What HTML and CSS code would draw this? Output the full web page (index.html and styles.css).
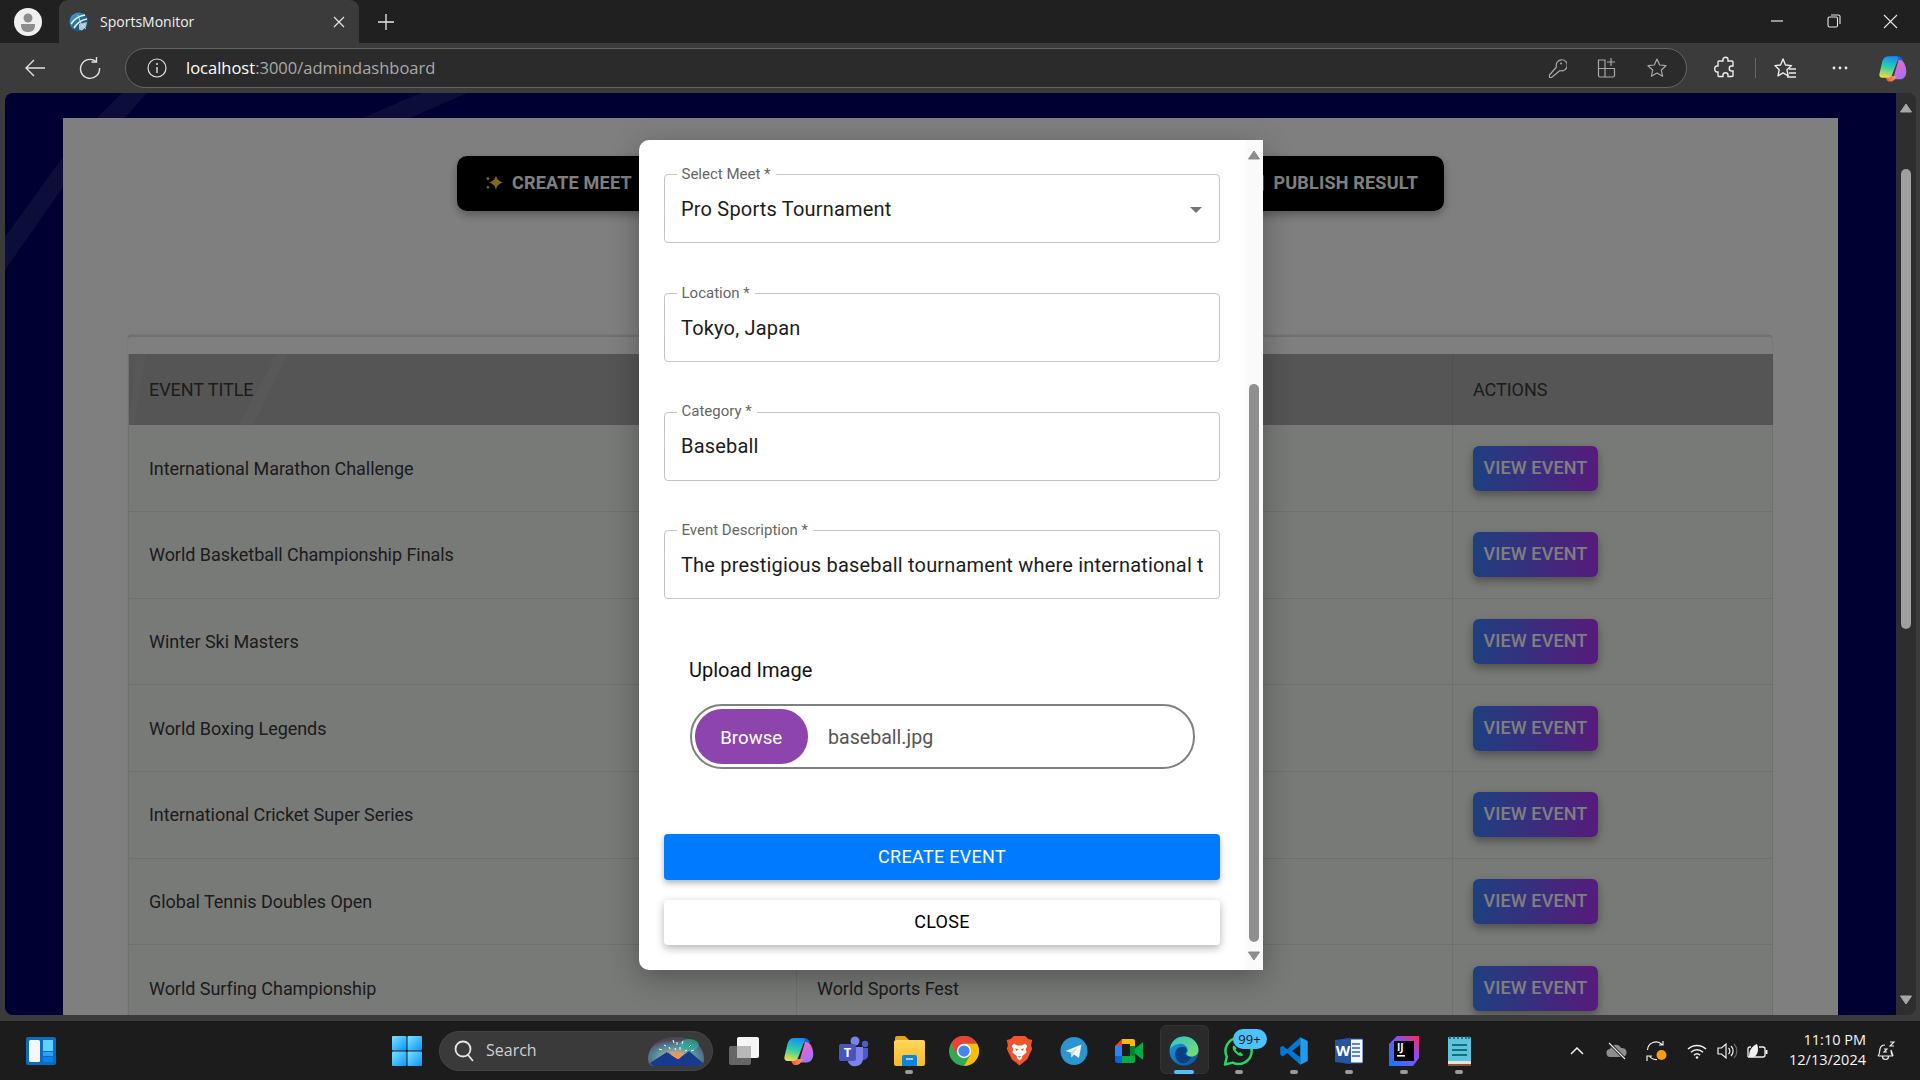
FILE: index.html
```html
<!DOCTYPE html>
<html lang="en">
<head>
<meta charset="utf-8">
<title>SportsMonitor</title>
<link rel="stylesheet" href="styles.css">
</head>
<body>
<svg class="defs" width="0" height="0" aria-hidden="true">
  <defs>
    <linearGradient id="gWin" x1="0" y1="0" x2="1" y2="1"><stop offset="0" stop-color="#7be3ff"/><stop offset="1" stop-color="#0a94fb"/></linearGradient>
    <linearGradient id="gCopA" x1=".5" y1="0" x2=".3" y2="1"><stop offset="0" stop-color="#1590f0"/><stop offset=".5" stop-color="#2fcfa8"/><stop offset="1" stop-color="#f5dc45"/></linearGradient>
    <linearGradient id="gCopB" x1=".2" y1="0" x2=".8" y2="1"><stop offset="0" stop-color="#ef6fb0"/><stop offset=".6" stop-color="#c56ae8"/><stop offset="1" stop-color="#8f7cf5"/></linearGradient>
    <linearGradient id="gCopC" x1="0" y1="0" x2="1" y2="0"><stop offset="0" stop-color="#f0503a"/><stop offset="1" stop-color="#f8a05a"/></linearGradient>
    <linearGradient id="gEdgeA" x1="0" y1="0" x2="1" y2="1"><stop offset="0" stop-color="#1b9de2"/><stop offset="1" stop-color="#0b4f9e"/></linearGradient>
    <linearGradient id="gEdgeB" x1="0" y1="0" x2="1" y2="1"><stop offset="0" stop-color="#2cc3c8"/><stop offset="1" stop-color="#7fe06a"/></linearGradient>
    <linearGradient id="gIj" x1="0" y1="1" x2="1" y2="0"><stop offset="0" stop-color="#087cfa"/><stop offset=".55" stop-color="#7f52ff"/><stop offset="1" stop-color="#fe2857"/></linearGradient>
    <linearGradient id="gFolder" x1="0" y1="0" x2="0" y2="1"><stop offset="0" stop-color="#ffd75e"/><stop offset="1" stop-color="#fbb92a"/></linearGradient>
    <radialGradient id="gSky" cx=".5" cy=".72" r=".62"><stop offset="0" stop-color="#f6cfa0"/><stop offset=".3" stop-color="#b8a888"/><stop offset=".62" stop-color="#4f8f9a"/><stop offset=".88" stop-color="#5a6080"/><stop offset="1" stop-color="#4a4a52"/></radialGradient>
    <linearGradient id="gFav" x1="0" y1="0" x2="1" y2="1"><stop offset="0" stop-color="#45b2e0"/><stop offset=".6" stop-color="#1c5f86"/><stop offset="1" stop-color="#123a55"/></linearGradient>
  </defs>
</svg>

<header class="tabstrip">
  <div class="avatar">
    <svg width="28" height="28" viewBox="0 0 28 28"><ellipse cx="14" cy="14" rx="14" ry="14" fill="#f0f0f0"/><circle cx="14" cy="10" r="4.500" fill="#8d8d8d"/><path d="M7 16h14v2a6 6 0 0 1-6 6h-2a6 6 0 0 1-6-6z" fill="#8d8d8d"/></svg>
  </div>
  <div class="tab">
    <svg width="20" height="20" viewBox="0 0 20 20"><circle cx="10" cy="10" r="9.500" fill="url(#gFav)"/><path d="M2 12C5 7 10 4 16 3M5 16c3-5 7-8 13-9" stroke="#eef5f8" stroke-width="1.600" fill="none"/><path d="M10 12l8-2-1 5-4 3.500-3-1z" fill="#b9c6cd"/><path d="M9 3l3 9 5 5" stroke="#dfe9ee" stroke-width=".8" fill="none"/></svg>
    <span class="tab-title">SportsMonitor</span>
    <svg class="tab-close" width="12" height="12" viewBox="0 0 12 12"><path d="M1 1l10 10M11 1L1 11" stroke="#e6e6e6" stroke-width="1.200"/></svg>
  </div>
  <div class="newtab"><svg width="18" height="18" viewBox="0 0 18 18"><path d="M9 1v16M1 9h16" stroke="#e6e6e6" stroke-width="1.300"/></svg></div>
  <div class="winctl">
    <span class="winbtn"><svg width="14" height="14" viewBox="0 0 14 14"><path d="M1 7h12" stroke="#e6e6e6" stroke-width="1.200"/></svg></span>
    <span class="winbtn"><svg width="14" height="14" viewBox="0 0 14 14"><rect x="1" y="3" width="9.500" height="10" rx="1.500" fill="none" stroke="#e6e6e6" stroke-width="1.100"/><path d="M4 1h7.500A1.500 1.500 0 0 1 13 2.500V10" fill="none" stroke="#e6e6e6" stroke-width="1.100"/></svg></span>
    <span class="winbtn"><svg width="15" height="15" viewBox="0 0 15 15"><path d="M1 1l13 13M14 1L1 14" stroke="#e6e6e6" stroke-width="1.100"/></svg></span>
  </div>
</header>

<nav class="toolbar">
  <span class="navbtn"><svg width="24" height="24" viewBox="0 0 24 24"><path d="M22 12H3M11 4l-8 8 8 8" fill="none" stroke="#e2e2e2" stroke-width="1.400"/></svg></span>
  <span class="navbtn"><svg width="24" height="24" viewBox="0 0 24 24"><path d="M18 5.500A9.500 9.500 0 1 0 21.500 12" fill="none" stroke="#e2e2e2" stroke-width="1.400"/><path d="M18.500 1v5h-5" fill="none" stroke="#e2e2e2" stroke-width="1.400"/></svg></span>
  <div class="address">
    <svg width="20" height="20" viewBox="0 0 20 20"><circle cx="10" cy="10" r="9" fill="none" stroke="#e2e2e2" stroke-width="1.200"/><path d="M10 9v6" stroke="#e2e2e2" stroke-width="1.400"/><circle cx="10" cy="6" r="1" fill="#e2e2e2"/></svg>
    <span class="url"><span class="url-host">localhost</span>:3000/admindashboard</span>
    <div class="addr-icons">
      <span class="addr-icon"><svg width="20" height="22" viewBox="0 0 20 22"><path d="M9.500 10A5.500 5.500 0 1 1 13 13.500L4.500 20.500H2.500V18z" fill="none" stroke="#a8a8a8" stroke-width="1.200" stroke-linejoin="round"/><circle cx="14" cy="6.500" r="1" fill="#a8a8a8"/></svg></span>
      <span class="addr-icon"><svg width="20" height="22" viewBox="0 0 20 22"><path d="M1.500 3h6.500v8.500H1.500zM1.500 11.500H8v8.500H3a1.500 1.500 0 0 1-1.500-1.500zM8 11.500h9.500V18.500a1.500 1.500 0 0 1-1.500 1.500H8zM14 1v8M10 5h8" fill="none" stroke="#a8a8a8" stroke-width="1.200"/></svg></span>
      <span class="addr-icon"><svg width="22" height="22" viewBox="0 0 22 22"><path d="M11 2l2.700 6 6.300.7-4.700 4.300 1.300 6.300L11 16l-5.600 3.300L6.700 13 2 8.700 8.300 8z" fill="none" stroke="#a8a8a8" stroke-width="1.200" stroke-linejoin="round"/></svg></span>
    </div>
  </div>
  <span class="tool tool-puzzle"><svg width="22" height="24" viewBox="0 0 22 24"><path d="M9 3.500c0-3 5-3 5 0V5h4a1 1 0 0 1 1 1v4h-1.500c-3 0-3 5 0 5H19v4.500a1 1 0 0 1-1 1h-4V19c0-3-5-3-5 0v1.500H5a1 1 0 0 1-1-1V16H3c-3 0-3-6 0-6h1V6a1 1 0 0 1 1-1h4z" fill="none" stroke="#ececec" stroke-width="1.400"/></svg></span>
  <span class="tool-sep"></span>
  <span class="tool"><svg width="24" height="24" viewBox="0 0 24 24"><path d="M10 2l2.500 6 6 .6-4.500 4.200 1.200 6-5.200-3-5 3 1.200-6L2 8.600 7.500 8z" transform="translate(0 1)" fill="none" stroke="#ececec" stroke-width="1.400" stroke-linejoin="round"/><path d="M16 13h7M16 17h7M14 21h9" stroke="#ececec" stroke-width="1.300"/></svg></span>
  <span class="tool tool-more"><svg width="18" height="6" viewBox="0 0 18 6"><circle cx="3" cy="3" r="1.400" fill="#ececec"/><circle cx="9" cy="3" r="1.400" fill="#ececec"/><circle cx="15" cy="3" r="1.400" fill="#ececec"/></svg></span>
  <span class="tool tool-copilot"><svg width="28" height="27" viewBox="0 0 30 28"><path d="M16 1h4c3 0 5 2 6 5H15z" fill="#1566d6"/><path d="M21 5c4 0 6 2 7.500 7 1.500 6 .5 9-1 11-1 1.500-3 2.500-5 2.500H15z" fill="url(#gCopB)"/><path d="M7 22h12l-2 3c-1 2-2.500 3-4.500 3H11c-2 0-3.500-2-4-6z" fill="url(#gCopC)"/><path d="M10 1h8c2.500 0 3 1.500 2.500 3L14 21c-1 2-2.500 3-5 3H4c-3 0-4-2-3.500-4.500L3 9c1-5 3-8 7-8z" fill="url(#gCopA)"/></svg></span>
</nav>

<div class="viewport">
  <main class="page">
    <svg class="page-bands" viewBox="0 0 1891 922" preserveAspectRatio="none" aria-hidden="true">
      <polygon points="0,144 58,64 92,25 117,0 142,0 120,25 58,94 0,177"/>
      <polygon points="300,60 357,25 416,0 462,0 405,25 340,60"/>
    </svg>
    <section class="panel">
      <div class="actions">
        <button class="act act-meet">
          <svg width="19" height="19" viewBox="0 0 19 19"><path d="M11 2c.8 4 2.500 6 7 7.500-4.500 1.500-6.200 3.500-7 7.500-.8-4-2.500-6-7-7.500 4.500-1.500 6.200-3.500 7-7.500z" fill="#ffd54a"/><path d="M3 3c.3 1.500 1 2.200 2.200 2.600C4 6 3.300 6.700 3 8.200 2.700 6.700 2 6 .8 5.600 2 5.200 2.700 4.500 3 3zM3 12c.3 1.200.8 1.800 2 2.200-1.200.4-1.700 1-2 2.300-.3-1.300-.8-1.900-2-2.300 1.200-.4 1.700-1 2-2.200z" fill="#ffd54a"/></svg>
          <span>CREATE MEET</span>
        </button>
        <span class="act act-mid"></span>
        <button class="act act-pub">
          <svg width="20" height="20" viewBox="0 0 20 20"><rect x="2" y="2" width="16" height="16" rx="2" fill="#dfe8f5" stroke="#3ea6ff" stroke-width="2"/></svg>
          <span>PUBLISH RESULT</span>
        </button>
      </div>
      <div class="card">
        <table class="events">
          <colgroup><col class="c1"><col class="c2"><col class="c3"></colgroup>
          <thead>
            <tr>
              <th class="th-first">
                <svg class="th-bands" width="300" height="71" viewBox="0 0 300 71" aria-hidden="true"><polygon points="0,71 4,71 17,0 8,0"/><polygon points="110,71 124,71 158,0 148,0"/></svg>
                EVENT TITLE
              </th>
              <th></th>
              <th>ACTIONS</th>
            </tr>
          </thead>
          <tbody>
            <tr><td>International Marathon Challenge</td><td></td><td><button class="view">VIEW EVENT</button></td></tr>
            <tr><td>World Basketball Championship Finals</td><td></td><td><button class="view">VIEW EVENT</button></td></tr>
            <tr><td>Winter Ski Masters</td><td></td><td><button class="view">VIEW EVENT</button></td></tr>
            <tr><td>World Boxing Legends</td><td></td><td><button class="view">VIEW EVENT</button></td></tr>
            <tr><td>International Cricket Super Series</td><td></td><td><button class="view">VIEW EVENT</button></td></tr>
            <tr><td>Global Tennis Doubles Open</td><td></td><td><button class="view">VIEW EVENT</button></td></tr>
            <tr><td>World Surfing Championship</td><td>World Sports Fest</td><td><button class="view">VIEW EVENT</button></td></tr>
          </tbody>
        </table>
      </div>
    </section>
    <div class="overlay"></div>
    <div class="modal">
      <form class="modal-body">
        <div class="field">
          <label class="field-label">Select Meet *</label>
          <div class="field-value">Pro Sports Tournament</div>
          <svg class="caret" width="12" height="6" viewBox="0 0 12 6"><polygon points="0,0 12,0 6,6" fill="#757575"/></svg>
        </div>
        <div class="field">
          <label class="field-label">Location *</label>
          <div class="field-value">Tokyo, Japan</div>
        </div>
        <div class="field field-cat">
          <label class="field-label">Category *</label>
          <div class="field-value">Baseball</div>
        </div>
        <div class="field field-desc">
          <label class="field-label">Event Description *</label>
          <div class="field-value">The prestigious baseball tournament where international t</div>
        </div>
        <div class="upload-label">Upload Image</div>
        <div class="upload">
          <span class="browse">Browse</span>
          <span class="filename">baseball.jpg</span>
        </div>
        <button type="button" class="btn-create">CREATE EVENT</button>
        <button type="button" class="btn-close">CLOSE</button>
      </form>
      <div class="modal-scroll">
        <svg class="arrow-up" width="12" height="10" viewBox="0 0 12 10"><path d="M6 1l5.500 8H.5z" fill="#8c8c8c" stroke="#8c8c8c" stroke-linejoin="round"/></svg>
        <span class="modal-thumb"></span>
        <svg class="arrow-down" width="12" height="10" viewBox="0 0 12 10"><path d="M6 9L.5 1h11z" fill="#8c8c8c" stroke="#8c8c8c" stroke-linejoin="round"/></svg>
      </div>
    </div>
  </main>
  <aside class="page-scroll">
    <svg width="12" height="10" viewBox="0 0 12 10"><path d="M6 1l5.500 8H.5z" fill="#a8a8a8" stroke="#a8a8a8" stroke-linejoin="round"/></svg>
    <span class="page-thumb"></span>
    <svg class="page-arrow-down" width="12" height="10" viewBox="0 0 12 10"><path d="M6 9L.5 1h11z" fill="#a8a8a8" stroke="#a8a8a8" stroke-linejoin="round"/></svg>
  </aside>
</div>

<footer class="taskbar">
  <span class="widgets">
    <svg width="30" height="28" viewBox="0 0 30 28"><rect width="30" height="28" rx="2" fill="#0f6cbd"/><rect x="3" y="3" width="11" height="22" rx="1.500" fill="#f4f6f8"/><rect x="17" y="3" width="10" height="11" fill="#5fd0ff"/><rect x="17" y="15" width="10" height="4" fill="#2aa3f0"/><rect x="17" y="20" width="10" height="5" fill="#0a84e8"/></svg>
  </span>
  <span class="slot slot-start">
    <svg width="30" height="30" viewBox="0 0 30 30"><rect width="14.500" height="14.500" rx="1" fill="url(#gWin)"/><rect x="15.500" width="14.500" height="14.500" rx="1" fill="url(#gWin)"/><rect y="15.500" width="14.500" height="14.500" rx="1" fill="url(#gWin)"/><rect x="15.500" y="15.500" width="14.500" height="14.500" rx="1" fill="url(#gWin)"/></svg>
  </span>
  <div class="search">
    <svg width="22" height="24" viewBox="0 0 22 24"><circle cx="10" cy="10" r="7.500" fill="none" stroke="#e6e6e6" stroke-width="1.800"/><path d="M15 16l5 6" stroke="#e6e6e6" stroke-width="1.800"/></svg>
    <span class="search-text">Search</span>
    <svg class="search-badge" width="58" height="30" viewBox="0 0 58 30"><path d="M1 23C1 9 14 1 29 1s28 8 28 22c0 4-2 7-6 7H7c-4 0-6-3-6-7z" fill="url(#gSky)"/><ellipse cx="42" cy="9" rx="10" ry="6" fill="#28b8a0" opacity=".65"/><path d="M17 9l2 1M26 4l1 3M30 6v3M36 5l-1 3M44 9l-2 2M12 13l3 1M22 11l1 2M33 11v3M28 12l.5 2M40 14l-2 1M47 14l-3 1M20 16l1 1" stroke="#fff" stroke-width="1"/><path d="M3 27L20 16l9 6 2 1 11-8 14 12c-1 2-3 3-5 3H8c-2 0-4-1-5-3z" fill="#183a8c"/><path d="M24 19l5 3 3 1 4-4-6-3z" fill="#ec8f50" opacity=".85"/></svg>
  </div>
  <span class="slot slot-first">
    <svg width="30" height="28" viewBox="0 0 30 28"><rect y="9" width="22" height="19" rx="2" fill="#666"/><rect x="8" width="22" height="21" rx="2" fill="#f5f5f5"/><rect x="8" y="9" width="14" height="12" fill="#b8b8b8"/></svg>
  </span>
  <span class="slot">
    <svg width="30" height="28" viewBox="0 0 30 28"><path d="M16 1h4c3 0 5 2 6 5H15z" fill="#1566d6"/><path d="M21 5c4 0 6 2 7.500 7 1.500 6 .5 9-1 11-1 1.500-3 2.500-5 2.500H15z" fill="url(#gCopB)"/><path d="M7 22h12l-2 3c-1 2-2.500 3-4.500 3H11c-2 0-3.500-2-4-6z" fill="url(#gCopC)"/><path d="M10 1h8c2.500 0 3 1.500 2.500 3L14 21c-1 2-2.500 3-5 3H4c-3 0-4-2-3.500-4.500L3 9c1-5 3-8 7-8z" fill="url(#gCopA)"/></svg>
  </span>
  <span class="slot">
    <svg width="32" height="32" viewBox="0 0 32 32"><circle cx="17" cy="6" r="4.500" fill="#7b83eb"/><circle cx="27" cy="9" r="3.200" fill="#5059c9"/><path d="M22 13h8v8a5 5 0 0 1-8 3z" fill="#5059c9"/><path d="M10 12h15v12a8 8 0 0 1-15 3z" fill="#7b83eb"/><rect x="1" y="9" width="17" height="17" rx="2" fill="#4b53bc"/><text class="svg-t" x="9.500" y="22" text-anchor="middle">T</text></svg>
  </span>
  <span class="slot slot-open">
    <svg width="31" height="30" viewBox="0 0 31 30"><path d="M1 2a2 2 0 0 1 2-2h8l4 4H1z" fill="#e3a21a"/><rect x="0" y="4" width="31" height="26" rx="2" fill="url(#gFolder)"/><path d="M10 19h11a2 2 0 0 1 2 2v9H8v-9a2 2 0 0 1 2-2z" fill="#0c84d8"/><rect x="12" y="22" width="7" height="2" fill="#9bd4f7"/></svg>
  </span>
  <span class="slot">
    <svg width="30" height="30" viewBox="0 0 48 48"><circle cx="24" cy="24" r="24" fill="#34a853"/><path d="M24 12h20.800A24 24 0 0 1 24 48l10.400-18z" fill="#fbbc05"/><path d="M24 12h20.800A24 24 0 0 0 3.200 12L13.600 30z" fill="#ea4335"/><circle cx="24" cy="24" r="11.500" fill="#fff"/><circle cx="24" cy="24" r="9" fill="#4285f4"/></svg>
  </span>
  <span class="slot">
    <svg width="27" height="31" viewBox="0 0 24 28"><path d="M7 1h10l3 2.500 3.500 1-1 5 1 3L19 22l-7 5.500L5 22 .5 12.500l1-3-1-5L4 3.500z" fill="#f1562b"/><path d="M7 8l3 1.500h4L17 8l2 2-1.500 3 1 2.500-4 3.500-.5 2.500-2 1.500-2-1.500-.5-2.500-4-3.500 1-2.500L5 10z" fill="#fff"/><path d="M8 12l3 1-2 1.500zM16 12l-3 1 2 1.500zM10.500 19h3L12 20.500z" fill="#f1562b"/></svg>
  </span>
  <span class="slot">
    <svg width="28" height="28" viewBox="0 0 28 28"><ellipse cx="14" cy="14" rx="13.500" ry="14" fill="#2a95d0"/><path d="M5.500 14L21.500 7.500 19 21l-5-3.500-2.500 3-.8-5z" fill="#f2f7fa"/><path d="M10.700 15.500l7-5-5 6.500-1.500 3.500z" fill="#bcd6e6"/></svg>
  </span>
  <span class="slot">
    <svg width="28" height="28" viewBox="0 0 28 28"><path d="M0 9L7 2v7z" fill="#ea4335"/><path d="M0 9h7v10H0z" fill="#2684fc"/><path d="M0 19h7v7H2a2 2 0 0 1-2-2z" fill="#0066da"/><path d="M7 2h11a2 2 0 0 1 2 2v5h-5V7H7z" fill="#ffba00"/><path d="M7 19h13v5a2 2 0 0 1-2 2H7z" fill="#00ac47"/><rect x="7" y="7" width="8" height="12" fill="#1c1c1c"/><path d="M15 9h5v10h-5z" fill="#00832d"/><path d="M20 11.500L28 5v18l-8-6.500z" fill="#00ac47"/></svg>
  </span>
  <span class="slot slot-active">
    <svg width="30" height="30" viewBox="0 0 30 30"><circle cx="15" cy="15" r="14.500" fill="url(#gEdgeA)"/><path d="M1 13C2 5 8 .5 15 .5c8 0 14.500 6 14.500 13.500 0 4-3 6.500-7 6.500-3 0-5.500-1.500-5-3.500 1-1 1.500-2 1-4C17.500 9 13 7 9 8c-4 1-7 3-8 5z" fill="url(#gEdgeB)"/><path d="M10 26c-4-3-5-9-2-13 3-3 8-3 9.500 0 .5 2 0 3-1 4-.5 2 2 4 6 4-3 6-9 8-12.500 5z" fill="#0a3f86"/></svg>
  </span>
  <span class="slot slot-open">
    <svg class="wa" width="31" height="32" viewBox="0 0 32 32"><path d="M2 30l2-8A13.500 13.500 0 1 1 10 28z" fill="none" stroke="#25d366" stroke-width="2.600" stroke-linejoin="round"/><path d="M11 10c-2 2-1 5 2 8s6 4 8 2l-3-3-2 1-3-3 1-2z" fill="#25d366"/></svg>
    <span class="badge">99+</span>
  </span>
  <span class="slot slot-open">
    <svg width="30" height="30" viewBox="0 0 24 24"><path d="M17 1L6.500 10.500 3 7.700 1 9v6l2 1.300 3.500-2.800L17 23v-6l-6.500-5L17 7z" fill="#0078d4"/><path d="M17 1l6 3v16l-6 3z" fill="#1f9cf0"/></svg>
  </span>
  <span class="slot slot-open">
    <svg width="28" height="30" viewBox="0 0 28 30"><rect x="9" y="3" width="19" height="24" rx="1" fill="#f4f6f8" stroke="#1e4e9c"/><path d="M17 8h8M17 12h8M17 16h8M17 20h8" stroke="#2b66b8" stroke-width="1.600"/><path d="M0 4l16-2v26l-16-2z" fill="#27549f"/><text class="svg-w" x="8" y="20" text-anchor="middle">W</text></svg>
  </span>
  <span class="slot slot-open">
    <svg width="30" height="30" viewBox="0 0 30 30"><path d="M8 0h22v22l-6 8H0V8z" fill="url(#gIj)"/><rect x="5" y="5" width="20" height="20" fill="#000"/><text class="svg-ij" x="8" y="15">IJ</text><rect x="8" y="19" width="8" height="1.600" fill="#fff"/></svg>
  </span>
  <span class="slot slot-open">
    <svg width="23" height="30" viewBox="0 0 23 30"><rect y="1" width="23" height="25" rx="1" fill="#5ec3dc"/><path d="M2 0v3M6 0v3M10 0v3M14 0v3M18 0v3M21 0v3" stroke="#11565f" stroke-width="1.400"/><path d="M4 9h15M4 14h15M4 19h15" stroke="#12707f" stroke-width="1.800"/><rect y="25" width="23" height="3" fill="#e7e2d9"/><rect y="28" width="23" height="2" fill="#8a5232"/></svg>
  </span>
  <div class="tray">
    <span class="tray-slot"><svg width="14" height="8" viewBox="0 0 14 8"><path d="M1 7l6-6 6 6" fill="none" stroke="#f0f0f0" stroke-width="1.500"/></svg></span>
    <span class="tray-slot"><svg width="22" height="18" viewBox="0 0 22 18"><path d="M5 15a4 4 0 0 1-1-8 6 6 0 0 1 11-1 4.500 4.500 0 0 1 2 9z" fill="#8e8e8e"/><path d="M3 1l16 16" stroke="#1b1b1b" stroke-width="3"/><path d="M3 1l16 16" stroke="#f0f0f0" stroke-width="1.100"/></svg></span>
    <span class="tray-slot"><svg width="22" height="22" viewBox="0 0 22 22"><path d="M1.500 10A8.500 8.500 0 0 1 16 4.500M17 1v4h-4" fill="none" stroke="#f0f0f0" stroke-width="1.200"/><path d="M11 19.500A8 8 0 0 1 3.500 16M1 21v-5h5" fill="none" stroke="#f0f0f0" stroke-width="1.200"/><circle cx="15.500" cy="15" r="5" fill="#f99d10"/></svg></span>
    <span class="tray-slot tray-narrow tray-wifi"><svg width="20" height="16" viewBox="0 0 20 16"><path d="M1 6a13 13 0 0 1 18 0M4 9.200a8.500 8.500 0 0 1 12 0M7 12.200a4 4 0 0 1 6 0" fill="none" stroke="#f0f0f0" stroke-width="1.500"/><circle cx="10" cy="14.500" r="1.300" fill="#f0f0f0"/></svg></span>
    <span class="tray-slot tray-narrow"><svg width="21" height="18" viewBox="0 0 21 18"><path d="M1 6h3.500L9 2v14l-4.500-4H1z" fill="none" stroke="#f0f0f0" stroke-width="1.200"/><path d="M11.500 6a4 4 0 0 1 0 6M14 4a7 7 0 0 1 0 10" fill="none" stroke="#f0f0f0" stroke-width="1.200"/><path d="M17 2a10 10 0 0 1 0 14" fill="none" stroke="#6b6b6b" stroke-width="1.200"/></svg></span>
    <span class="tray-slot tray-narrow"><svg width="21" height="16" viewBox="0 0 21 16"><path d="M1 14V6a2 2 0 0 1 2-2h1M12 4h4a2 2 0 0 1 2 2v6a2 2 0 0 1-2 2H1" fill="none" stroke="#f0f0f0" stroke-width="1.300"/><rect x="18.500" y="7" width="2" height="4" fill="#f0f0f0"/><path d="M2 14c0-7 3-11 8-13 2 5 1 11-3 13z" fill="#f0f0f0"/></svg></span>
    <div class="clock"><span>11:10 PM</span><span>12/13/2024</span></div>
    <span class="tray-slot tray-bell"><svg width="20" height="20" viewBox="0 0 20 20"><path d="M2 15c2-2 1.500-5 2-7 .5-2.500 2.500-4 5-4v0M15 9c0 3 .5 4.500 2 6zM2 15h15M6.500 15.500c0 4 6 4 6 0" fill="none" stroke="#f0f0f0" stroke-width="1.200"/><path d="M8 8h3l-3 3h3M14 1h4l-4 4h4" fill="none" stroke="#f0f0f0" stroke-width="1.100"/></svg></span>
  </div>
</footer>
</body>
</html>
```

FILE: styles.css
```css
* { box-sizing: border-box; }
html, body { margin: 0; height: 100%; }
body {
  width: 1920px;
  height: 1080px;
  overflow: hidden;
  display: flex;
  flex-direction: column;
  font-family: Roboto, "Noto Sans", sans-serif;
  background: #3b3b3b;
}
.defs { position: absolute; }
button { font-family: inherit; border: 0; margin: 0; }

/* browser tabs */
.tabstrip {
  height: 43px;
  flex: none;
  display: flex;
  align-items: center;
  background: #202020;
  font-family: "Open Sans", "Noto Sans", sans-serif;
}
.avatar { margin-left: 14px; width: 28px; height: 28px; display: flex; }
.tab {
  margin-left: 17px;
  width: 300px;
  height: 43px;
  align-self: flex-end;
  display: flex;
  align-items: center;
  padding: 1px 14px 0 10px;
  background: #3b3b3b;
  border-radius: 9px 9px 0 0;
}
.tab-title { margin: 0 0 2px 11px; font-size: 14px; color: #f0f0f0; }
.tab-close { margin-left: auto; }
.newtab { margin-left: 12px; width: 30px; display: flex; justify-content: center; }
.winctl { margin-left: auto; padding-right: 1px; display: flex; }
.winbtn { width: 57px; display: flex; justify-content: center; }

/* toolbar */
.toolbar {
  height: 50px;
  flex: none;
  display: flex;
  align-items: center;
  padding-left: 10px;
  background: #3b3b3b;
  font-family: "Open Sans", "Noto Sans", sans-serif;
}
.navbtn { width: 50px; display: flex; justify-content: center; margin-right: 5px; }
.address {
  margin-left: 5px;
  width: 1562px;
  height: 40px;
  display: flex;
  align-items: center;
  padding: 0 4px 0 21px;
  background: #2b2b2b;
  border: 1.500px solid #656565;
  border-radius: 20px;
}
.url { margin: 0 0 2px 19px; font-size: 16.500px; color: #a9a9a9; }
.url-host { color: #fff; }
.addr-icons { margin-left: auto; display: flex; }
.addr-icon { width: 50px; display: flex; justify-content: center; }
.tool { width: 40px; display: flex; justify-content: center; }
.tool-puzzle { margin-left: 18px; }
.tool-sep { width: 1px; height: 20px; background: #666; margin: 0 9.500px; }
.tool-more { margin-left: 15px; }
.tool-copilot { margin-left: 13px; }

/* page area */
.viewport {
  flex: 1;
  min-height: 0;
  display: flex;
  padding: 0 4px 6px 5px;
  background: #3b3b3b;
}
.page {
  position: relative;
  flex: 1;
  min-width: 0;
  overflow: hidden;
  padding: 25px 58px 0;
  background: #000066;
  border-radius: 8px 0 0 8px;
}
.page-bands { position: absolute; inset: 0; width: 100%; height: 100%; fill: rgba(255,255,255,.1); }
.page-scroll {
  width: 20px;
  flex: none;
  display: flex;
  flex-direction: column;
  align-items: center;
  padding: 10px 0 10px;
  background: #2e2e2e;
  border-radius: 0 8px 8px 0;
}
.page-thumb { width: 10px; height: 460px; margin-top: 56px; background: #9f9f9f; border-radius: 5px; }
.page-arrow-down { margin-top: auto; }

.panel { position: relative; background: #fff; height: 1000px; padding-top: 38px; }
.actions { width: 987px; margin: 0 auto; height: 55px; display: flex; }
.act {
  display: flex;
  align-items: center;
  gap: 8px;
  height: 55px;
  padding-bottom: 2px;
  font-size: 18px;
  font-weight: 700;
  letter-spacing: .2px;
  color: #fff;
  background: #000;
  box-shadow: 0 4px 10px rgba(0,0,0,.3);
}
.act-meet { padding: 0 28px 2px 28px; border-radius: 10px 0 0 10px; }
.act-mid { flex: 1; }
.act-pub { padding: 0 26px 2px 0; border-radius: 0 10px 10px 0; }

.card {
  margin: 124px 66px 0 65px;
  padding-top: 17px;
  background: #fff;
  border-top: 2px solid #e4e4e4;
  border-radius: 4px;
  box-shadow: 0 0 1px rgba(0,0,0,.4);
}
.events { width: 100%; border-collapse: collapse; table-layout: fixed; font-size: 18px; letter-spacing: -.05px; color: #383838; }
.c1 { width: 668px; }
.c2 { width: 656px; }
.c3 { width: 320px; }
.events th {
  height: 71px;
  padding: 0 20px;
  text-align: left;
  font-weight: 400;
  background: #aaa;
  border-right: 1px solid #9e9e9e;
}
.th-first { position: relative; }
.th-bands { position: absolute; left: 0; top: 0; fill: rgba(255,255,255,.09); }
.events td {
  height: 86.650px;
  padding: 0 20px;
  background: #f0f4f0;
  border-right: 1px solid #dcdfdc;
  border-bottom: 1px solid #dcdfdc;
}
.events td:first-child, .events th:first-child { border-left: 1px solid #dcdfdc; }
.view {
  width: 125px;
  height: 45px;
  display: block;
  padding: 0 0 2px;
  font-size: 18px;
  font-weight: 500;
  letter-spacing: .12px;
  color: #fff;
  background: linear-gradient(90deg, #3c80ff, #ae36f8);
  border-radius: 6px;
  box-shadow: 0 4px 8px rgba(0,0,0,.35);
}

.overlay { position: absolute; inset: 0; background: rgba(0,0,0,.5); }

/* modal */
.modal {
  position: absolute;
  left: 634px;
  top: 46.500px;
  width: 624px;
  height: 830px;
  display: flex;
  background: #fff;
  border-radius: 10px 0 0 10px;
  box-shadow: 0 8px 30px rgba(0,0,0,.3);
}
.modal-body { width: 606px; padding: 34.500px 0 0 25px; flex: none; }
.field {
  position: relative;
  width: 555.500px;
  height: 69px;
  margin-bottom: 50px;
  padding: 0 16px;
  display: flex;
  align-items: center;
  border: 1px solid #c4c4c4;
  border-radius: 4px;
}
.field:nth-child(2) { margin-bottom: 49.500px; }
.field-cat { margin-bottom: 49.500px; }
.field-cat .field-label { top: -11px; }
.field-desc { margin-bottom: 0; }
.field-label {
  position: absolute;
  left: 11.500px;
  top: -10px;
  padding: 0 5px;
  font-size: 15px;
  line-height: 18px;
  color: #666;
  background: #fff;
}
.field-value {
  font-size: 20px;
  line-height: 24px;
  letter-spacing: .00938em;
  color: #1c1c1c;
  white-space: nowrap;
  overflow: hidden;
  width: 100%;
}
.caret { position: absolute; right: 17px; top: 32px; }
.upload-label { margin: 58.500px 0 0 25px; font-size: 20px; line-height: 24px; color: #111; }
.upload {
  margin: 22.500px 0 0 25.500px;
  width: 505px;
  height: 65px;
  display: flex;
  align-items: center;
  padding-left: 3px;
  border: 2px solid #808080;
  border-radius: 32px;
}
.browse {
  width: 113.500px;
  height: 55px;
  display: flex;
  align-items: center;
  justify-content: center;
  padding-top: 2px;
  font-size: 18.700px;
  color: #fff;
  background: #8e44ad;
  border-radius: 27px;
}
.filename { margin: 2px 0 0 20px; font-size: 19.600px; color: #555; }
.btn-create, .btn-close {
  display: block;
  width: 556px;
  padding: 0 0 2px;
  font-size: 18px;
  font-weight: 400;
  letter-spacing: .3px;
  border-radius: 4px;
}
.btn-create {
  margin-top: 65px;
  height: 46px;
  color: #fff;
  background: #007bff;
  box-shadow: 0 3px 6px rgba(0,0,0,.3);
}
.btn-close {
  margin-top: 20px;
  height: 45px;
  color: #000;
  background: #fff;
  box-shadow: 0 3px 8px rgba(0,0,0,.3);
}
.modal-scroll {
  flex: 1;
  display: flex;
  flex-direction: column;
  align-items: center;
  padding: 10px 0 9px;
  background: #fafafa;
}
.modal-thumb { width: 10px; height: 558px; margin-top: 224px; background: #8f8f8f; border-radius: 5px; }
.arrow-down { margin-top: auto; }

/* taskbar */
.taskbar {
  height: 59px;
  flex: none;
  display: flex;
  align-items: center;
  padding-left: 26px;
  background: #1c1c1c;
  font-family: "Open Sans", "Noto Sans", sans-serif;
}
.widgets { width: 30px; display: flex; }
.slot {
  position: relative;
  width: 55px;
  height: 59px;
  flex: none;
  display: flex;
  align-items: center;
  justify-content: center;
}
.slot-start { margin-left: 323.500px; }
.slot-first { margin-left: 3.500px; }
.slot-open::after {
  content: "";
  position: absolute;
  bottom: 6px;
  left: 50%;
  width: 8px;
  height: 4px;
  margin-left: -4px;
  background: #9a9a9a;
  border-radius: 2px;
}
.slot-active::before {
  content: "";
  position: absolute;
  left: 3px;
  right: 3px;
  top: 4px;
  bottom: 6px;
  background: #2a2a2a;
  border: 1px solid #333;
  border-radius: 6px;
}
.slot-active::after {
  content: "";
  position: absolute;
  bottom: 6px;
  left: 50%;
  width: 20px;
  height: 4px;
  margin-left: -10px;
  background: #4cc2ff;
  border-radius: 2px;
}
.slot-active svg { position: relative; }
.wa { margin-left: -2px; }
.badge {
  position: absolute;
  left: 21px;
  top: 8px;
  width: 34px;
  height: 20px;
  display: flex;
  align-items: center;
  justify-content: center;
  font-size: 13px;
  color: #111;
  background: #4cc2ff;
  border-radius: 10px;
}
.search {
  margin-left: 4.500px;
  width: 274px;
  height: 40px;
  flex: none;
  display: flex;
  align-items: center;
  padding: 0 7px 0 13px;
  background: #3a3a3a;
  border: 1px solid #454545;
  border-radius: 20px;
}
.search-text { margin: 0 0 2px 11px; font-size: 16px; color: #d0d0d0; }
.search-badge { margin-left: auto; }
.svg-t { font: 700 13px "Open Sans", sans-serif; fill: #fff; }
.svg-w { font: 700 15px "Open Sans", sans-serif; fill: #fff; }
.svg-ij { font: 700 10px "Open Sans", sans-serif; fill: #fff; }
.tray { margin-left: auto; display: flex; align-items: center; padding-right: 19px; }
.tray-slot { width: 40px; display: flex; justify-content: center; }
.tray-narrow { width: 30px; }
.tray-wifi { margin-left: 5px; }
.tray-bell { width: 30px; margin-left: 5px; }
.clock {
  width: 94px;
  margin-bottom: 2px;
  display: flex;
  flex-direction: column;
  align-items: flex-end;
  font-size: 14.500px;
  line-height: 20px;
  color: #f5f5f5;
}
```
